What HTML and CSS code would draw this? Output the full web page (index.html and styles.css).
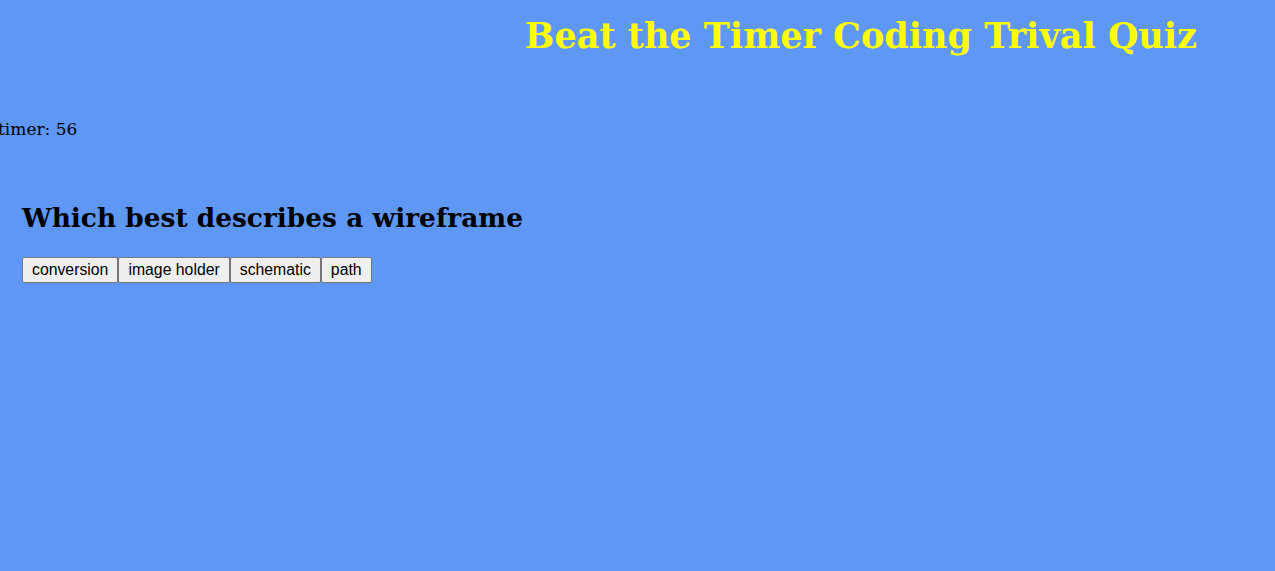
FILE: index.html
```html
<!DOCTYPE html>
<html>
<head>
<meta charset="utf-8">
<link rel="stylesheet" href="styles.css">
</head>
<body>
<header class="header">
  <h1 class="title">Beat the Timer Coding Trival Quiz</h1>
</header>
<p class="timer">timer: 56</p>
<section class="quiz">
  <h2 class="question">Which best describes a wireframe</h2>
  <div class="choices">
    <button class="choice">conversion</button><button class="choice">image holder</button><button class="choice">schematic</button><button class="choice">path</button>
  </div>
</section>
</body>
</html>
```
FILE: styles.css
```css
html, body {
  margin: 0;
  padding: 0;
}
body {
  background: #5f97f4;
  font-family: "DejaVu Serif", Georgia, serif;
  color: #000;
  height: 571px;
}
.header {
  display: flex;
  justify-content: flex-end;
  padding-right: 78px;
}
.title {
  margin: 12px 0 0 0;
  font-size: 35px;
  line-height: 48px;
  color: #ffff00;
  font-weight: bold;
}
.timer {
  margin: 57px 0 0 -2px;
  font-size: 17px;
  line-height: 24px;
}
.quiz {
  padding-left: 22px;
}
.question {
  margin: 59px 0 0 0;
  font-size: 26.4px;
  line-height: 36px;
  font-weight: bold;
}
.choices {
  display: flex;
  margin-top: 21px;
}
.choice {
  font-family: "Liberation Sans", Arial, sans-serif;
  font-size: 15.8px;
  height: 26px;
  padding: 1px 9px;
  border: 1px solid #767676;
  border-radius: 2px;
  background: #efefef;
  color: #000;
}
```
